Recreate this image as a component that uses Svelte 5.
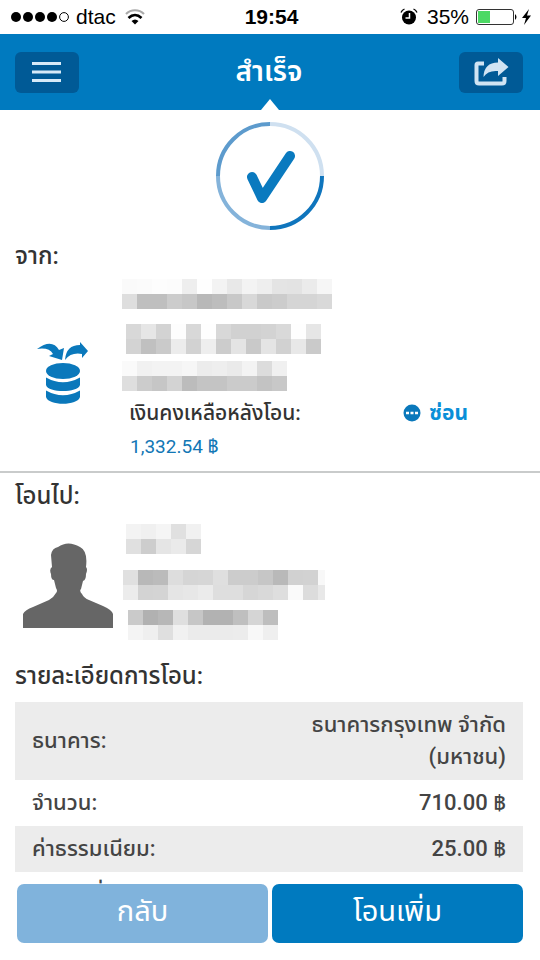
<script lang="ts">
	type Block = { x: number; y: number; last?: number; rows: number[][] };

	const cell = 15;

	// grey levels of the masked account lines, last is the width of a cut final cell
	const fromMask: Block[] = [
		{
			x: 0,
			y: 0,
			rows: [
				[250, 251, 253, 252, 238, 254, 243, 232, 243, 238, 228, 227, 235, 246],
				[222, 191, 191, 204, 199, 184, 189, 200, 216, 201, 204, 213, 213, 217]
			]
		},
		{
			x: 4,
			y: 45,
			rows: [
				[216, 230, 211, 253, 216, 254, 216, 209, 209, 211, 217, 254, 230],
				[211, 192, 202, 236, 210, 238, 204, 228, 201, 228, 209, 232, 202]
			]
		},
		{
			x: 0,
			y: 82,
			rows: [
				[250, 241, 243, 243, 246, 236, 238, 234, 243, 220, 240],
				[222, 204, 198, 211, 188, 196, 196, 203, 203, 195, 200]
			]
		}
	];

	const toMask: Block[] = [
		{
			x: 4,
			y: 0,
			rows: [
				[243, 240, 245, 224, 241],
				[224, 205, 229, 234, 214]
			]
		},
		{
			x: 1,
			y: 46,
			last: 7,
			rows: [
				[224, 184, 187, 221, 213, 214, 223, 204, 204, 198, 185, 209, 210, 248],
				[236, 211, 212, 229, 231, 235, 222, 222, 214, 217, 222, 250, 220, 232]
			]
		},
		{
			x: 6,
			y: 86,
			rows: [
				[202, 177, 183, 223, 198, 178, 178, 191, 213, 190],
				[244, 239, 223, 241, 235, 235, 235, 236, 248, 239]
			]
		}
	];

	const details = [
		{ label: 'ธนาคาร:', value: 'ธนาคารกรุงเทพ จำกัด (มหาชน)' },
		{ label: 'จำนวน:', value: '710.00 ฿' },
		{ label: 'ค่าธรรมเนียม:', value: '25.00 ฿' },
		{ label: 'โอนวันที่:', value: '15/09/2014 - 19:54' }
	];

	let showBalance = $state(true);
</script>

{#snippet mask(blocks: Block[], height: number)}
	<svg class="mask" width="210" {height} shape-rendering="crispEdges" aria-hidden="true">
		{#each blocks as b}
			{#each b.rows as row, r}
				{#each row as g, c}
					<rect
						x={b.x + c * cell}
						y={b.y + r * cell}
						width={b.last && c === row.length - 1 ? b.last : cell}
						height={cell}
						fill="rgb({g},{g},{g})"
					/>
				{/each}
			{/each}
		{/each}
	</svg>
{/snippet}

<div class="screen">
	<div class="status">
		<div class="carrier">
			<svg width="58" height="12" viewBox="0 0 58 12" aria-hidden="true">
				<circle cx="5" cy="6" r="5" />
				<circle cx="17" cy="6" r="5" />
				<circle cx="29" cy="6" r="5" />
				<circle cx="41" cy="6" r="5" />
				<circle cx="53" cy="6" r="4.4" fill="none" stroke="#000" />
			</svg>
			<span>dtac</span>
			<svg width="20" height="16" viewBox="0 0 20 16" fill="none" aria-hidden="true">
				<path d="M1 5C6 0 14 0 19 5" stroke="#aaa" stroke-width="2.200" />
				<path d="M3.500 9C7.500 5 12.500 5 16.500 9" stroke="#000" stroke-width="2.600" />
				<path d="M6.500 12Q10 9 13.500 12L10 15.500Z" fill="#000" />
			</svg>
		</div>
		<strong>19:54</strong>
		<div class="power">
			<svg class="alarm" width="18" height="18" viewBox="0 0 18 18" fill="none" aria-hidden="true">
				<circle cx="9" cy="9.500" r="7" fill="#000" />
				<path d="M1 4.500Q2 2 4.500 1M13.500 1Q16 2 17 4.500" stroke="#000" stroke-width="1.300" />
				<path d="M9.500 5V10H5.500" stroke="#fff" stroke-width="1.500" />
			</svg>
			<span>35%</span>
			<svg width="56" height="18" viewBox="0 0 56 18" aria-hidden="true">
				<rect x=".5" y="1.500" width="37" height="15" rx="2.500" fill="#fff" stroke="#333" />
				<rect x="2" y="3" width="12" height="12" fill="#4cd964" />
				<path d="M39 6Q42 9 39 12Z" />
				<path d="M53 1L46 10H50L48 17L55 7.500H51Z" />
			</svg>
		</div>
	</div>

	<header>
		<button type="button" class="tool" aria-label="เมนู">
			<svg width="30" height="22" viewBox="0 0 30 22" aria-hidden="true">
				<path d="M0 2.500H29M0 11H29M0 19.500H29" stroke="#d6eaf8" stroke-width="3.200" />
			</svg>
		</button>
		<h1>สำเร็จ</h1>
		<button type="button" class="tool" aria-label="แชร์">
			<svg width="36" height="28" viewBox="0 0 36 28" aria-hidden="true">
				<path d="M11 5.500H5Q3.500 5.500 3.500 7V23Q3.500 25.500 6 25.500H29Q31.500 25.500 31.500 23V19" fill="none" stroke="#d0e4f3" stroke-width="4" />
				<path d="M10.500 19Q11 4.500 25 4.500V0L35.500 9L25 18V13Q15 12 10.500 19Z" fill="#d0e4f3" />
			</svg>
		</button>
		<span class="notch"></span>
	</header>

	<main>
		<svg class="done" width="108" height="108" viewBox="0 0 108 108" fill="none" aria-hidden="true">
			<g stroke-width="4">
				<path d="M54 2A52 52 0 0 1 106 54" stroke="#cfe0f0" />
				<path d="M106 54A52 52 0 0 1 54 106" stroke="#0f75bd" />
				<path d="M54 106A52 52 0 0 1 2 54" stroke="#84b3da" />
				<path d="M2 54A52 52 0 0 1 54 2" stroke="#5d9bcd" />
			</g>
			<path d="M36 55L46 76L74 34" stroke="#0a7abf" stroke-width="10" stroke-linecap="round" stroke-linejoin="round" />
		</svg>

		<section class="from">
			<h2>จาก:</h2>
			<div class="party">
				<svg class="pic" width="90" height="70" viewBox="0 0 90 70" fill="#0a78bb" aria-hidden="true">
					<path d="M14 8Q29-3 36 9L41 7L39 19L26 15L30 13Q26 6 14 8Z" />
					<path d="M42 19Q43 4 57 4V1L65 10L59 17V13Q48 11 42 19Z" />
					<ellipse cx="40" cy="30" rx="17" ry="8" />
					<path d="M23 36.500Q40 46 57 36.500V44C55 52 25 52 23 44Z" />
					<path d="M23 49.500Q40 59 57 49.500V56C55 65 25 65 23 56Z" />
				</svg>
				<div class="info">
					{@render mask(fromMask, 115)}
					<div class="balance">
						<span>เงินคงเหลือหลังโอน:</span>
						<button type="button" class="toggle" onclick={() => (showBalance = !showBalance)}>
							<svg width="18" height="18" viewBox="0 0 18 18" aria-hidden="true">
								<circle cx="9" cy="9" r="8.500" fill="#0a78bb" />
								<path d="M3 7.800H6V10.200H3ZM7.500 7.800H10.500V10.200H7.500ZM12 7.800H15V10.200H12Z" fill="#fff" />
							</svg>
							{showBalance ? 'ซ่อน' : 'แสดง'}
						</button>
					</div>
					{#if showBalance}
						<p class="amount">1,332.54 ฿</p>
					{/if}
				</div>
			</div>
		</section>

		<section class="to">
			<h2>โอนไป:</h2>
			<div class="party">
				<svg class="pic" width="90" height="86" viewBox="0 0 90 86" fill="#666" aria-hidden="true">
					<path d="M0 85V71Q2 67 10 64L26 57Q31 54 33 50Q35 48 33 45L31 37Q28 37 28 31Q26 26 29 24L28 12Q29 5 35 4Q45-3 57 4Q65 8 63 24Q65 26 63 31Q63 37 60 38L58 46Q56 48 59 51Q61 55 66 57L80 63Q89 67 90 71V85Z" />
				</svg>
				<div class="info">
					{@render mask(toMask, 116)}
				</div>
			</div>
		</section>

		<section class="details">
			<h2>รายละเอียดการโอน:</h2>
			<table>
				<tbody>
					{#each details as d}
						<tr>
							<th scope="row">{d.label}</th>
							<td>{d.value}</td>
						</tr>
					{/each}
				</tbody>
			</table>
		</section>
	</main>

	<footer>
		<button type="button" class="back">กลับ</button>
		<button type="button" class="more">โอนเพิ่ม</button>
	</footer>
</div>

<style>
	:global(body) { margin: 0; }
	.screen { height: 100vh; display: flex; flex-direction: column; background: #fff; color: #333; font-family: Roboto, "Noto Sans Thai", "Noto Sans", sans-serif; font-size: 21px; }
	button { border: 0; padding: 0; font: inherit; cursor: pointer; }
	h1, h2, p { margin: 0; }
	h2 { font-size: 24px; line-height: 32px; font-weight: 500; }

	.status { flex: none; height: 34px; display: grid; grid-template-columns: 1fr auto 1fr; align-items: center; padding: 0 8px 0 11px; color: #000; font-family: "Liberation Sans", Arial, sans-serif; font-size: 21px; }
	.carrier, .power { display: flex; align-items: center; gap: 7px; }
	.carrier span { margin-right: 2px; }
	.power { justify-content: flex-end; }
	.alarm { margin-right: 2px; }

	header { flex: none; position: relative; height: 76px; display: flex; align-items: center; justify-content: space-between; padding: 0 17px 0 15px; box-sizing: border-box; background: #007abf; color: #fff; }
	h1 { font-size: 28px; line-height: 40px; font-weight: 600; }
	.tool { width: 64px; height: 41px; display: flex; align-items: center; justify-content: center; border-radius: 6px; background: #005a96; }
	.notch { position: absolute; left: 50%; bottom: 0; margin-left: -9px; border: 9px solid transparent; border-top: 0; border-bottom: 11px solid #fff; }

	main { flex: 1; min-height: 0; overflow-y: auto; scrollbar-width: none; }
	.done { display: block; margin: 12px auto 0; }
	section { padding: 0 17px 0 15px; }
	.from { padding-top: 10px; padding-bottom: 8px; border-bottom: 2px solid #c9cbcb; }
	.from .party { padding-top: 7px; }
	.to { padding-top: 7px; }
	.to .party { padding-top: 12px; }
	.party { display: flex; gap: 9px; padding-left: 8px; }
	.pic { flex: none; }
	.from .pic { margin-top: 62px; }
	.to .pic { margin-top: 19px; }
	.info { flex: 1; }
	.mask { display: block; }
	.balance { display: flex; align-items: center; justify-content: space-between; padding: 1px 55px 0 7px; line-height: 36px; font-weight: 500; }
	.toggle { display: flex; align-items: center; gap: 8px; background: none; color: #0a8fd8; font-weight: 700; line-height: 36px; }
	.amount { padding-left: 8px; font-size: 19px; line-height: 32px; color: #1277b5; }

	.details { padding-top: 20px; }
	table { width: 100%; margin-top: 10px; border-collapse: collapse; }
	tr:nth-child(odd) { background: #ececec; }
	th, td { padding: 7px 17px; font-size: 22px; line-height: 32px; font-weight: 500; color: #444; }
	th { padding-right: 0; text-align: left; white-space: nowrap; }
	td { padding-left: 120px; text-align: right; }

	footer { flex: none; display: flex; gap: 4px; padding: 0 17px 17px; }
	footer button { flex: 1; height: 59px; padding-bottom: 4px; border-radius: 7px; color: #fff; font-size: 29px; }
	.back { background: #80b3dc; }
	.more { background: #007abf; }
</style>
